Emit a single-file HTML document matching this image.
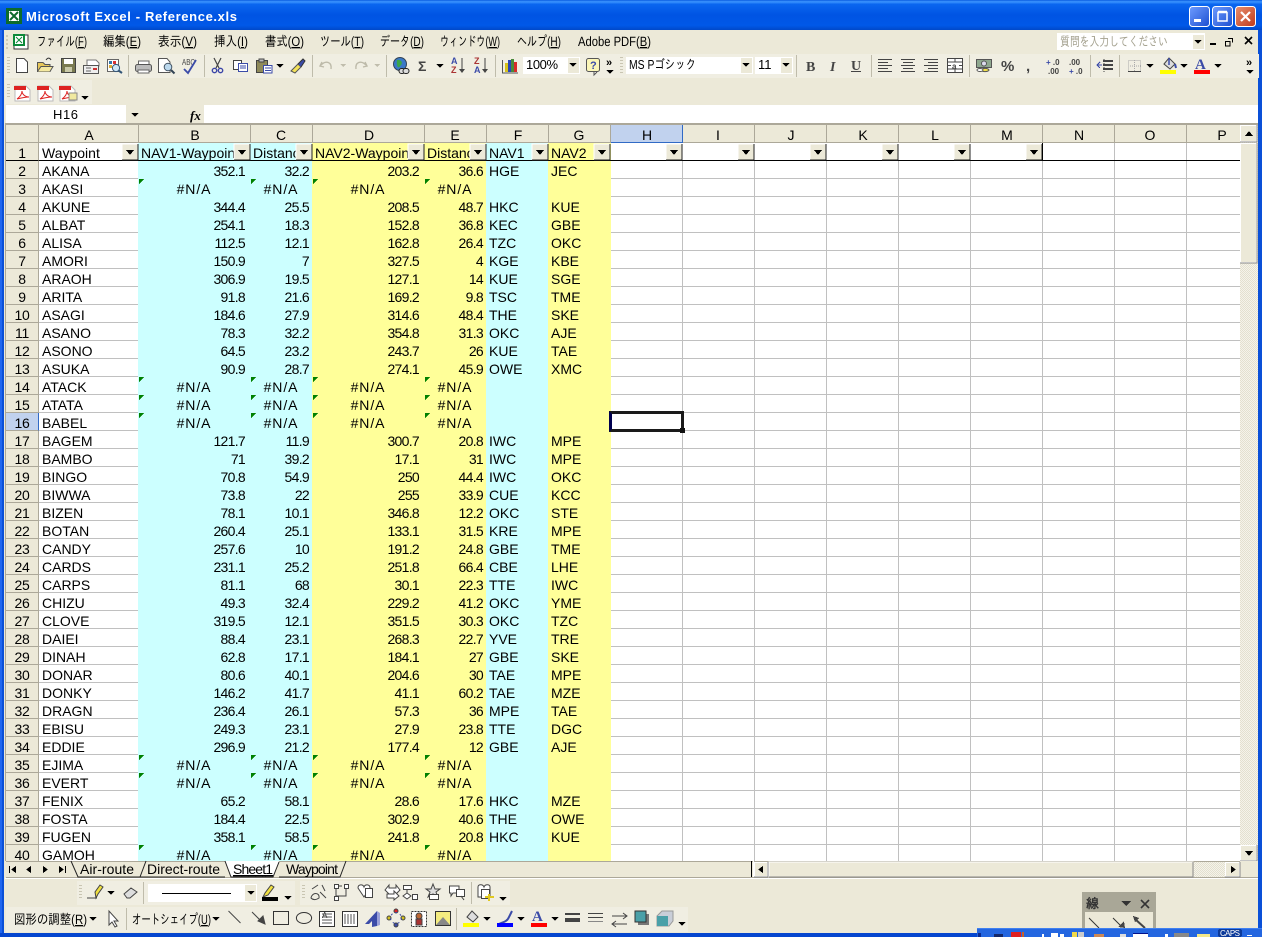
<!DOCTYPE html>
<html><head><meta charset="utf-8"><title>Microsoft Excel - Reference.xls</title>
<style>
html,body{margin:0;padding:0;width:1262px;height:937px;overflow:hidden;background:#ece9d8}
body{position:relative;font-family:"Liberation Sans","IPAGothic","Noto Sans CJK JP",sans-serif;color:#000}
#empty{position:absolute;left:610px;top:161px;width:630px;height:700px;background-color:#fff;
background-image:linear-gradient(to right,transparent 71px,#c0c0c0 71px),linear-gradient(to bottom,transparent 17px,#c0c0c0 17px);background-size:72px 100%,100% 18px;background-position:1px 0,0 0}
#clip{position:absolute;left:6px;top:143px;width:605px;height:718px;overflow:hidden}
table{border-collapse:separate;border-spacing:0;table-layout:fixed;width:605px;font-size:14px}
td,th{line-height:14px;padding:3px 0 0;font-weight:normal;white-space:nowrap;overflow:hidden;box-sizing:content-box;vertical-align:top}
th{background:#ece9d8;text-align:center;border-right:1px solid #aca899;border-bottom:1px solid #aca899;height:14px;letter-spacing:-.3px}
td{height:15px}
td:nth-child(2){background:#fff;border-bottom:1px solid #c0c0c0;height:14px;padding-left:3px}
td:nth-child(3),td:nth-child(4),td:nth-child(7){background:#ccffff}
td:nth-child(5),td:nth-child(6),td:nth-child(8){background:#ffff99}
td:nth-child(n+3):nth-child(-n+6){text-align:right;letter-spacing:-.7px}
td:nth-child(3),td:nth-child(5){padding-right:5px}
td:nth-child(4),td:nth-child(6){padding-right:3px}
td:nth-child(7){padding-left:3px}
td:nth-child(8){padding-left:3px}
tr.x td:nth-child(n+3):nth-child(-n+6){text-align:center;padding-left:0;padding-right:0;letter-spacing:.9px;background-image:linear-gradient(135deg,#008000 3.6px,transparent 3.6px);background-size:6px 6px;background-repeat:no-repeat;background-position:1px 0}
tr.f td{height:14px;border-bottom:1px solid #000;text-align:left!important;padding-left:3px!important;padding-right:0!important;letter-spacing:0!important}
tr.f th{border-bottom:1px solid #000}
tr.s th{background:#c1d2ee;border-right-color:#316ac5}
#sel{position:absolute;left:609px;top:411px;width:69px;height:15px;border:3px solid #1a1a1a;border-left-color:#000050}
svg{position:absolute;left:0;top:0}
</style></head><body>
<div id="empty"></div>
<div id="clip"><table>
<colgroup><col style="width:33px"><col style="width:99px"><col style="width:112px"><col style="width:62px"><col style="width:112px"><col style="width:62px"><col style="width:62px"><col style="width:63px"></colgroup>
<tr class="f"><th>1</th><td>Waypoint</td><td>NAV1-Waypoint</td><td>Distance</td><td>NAV2-Waypoint</td><td>Distance</td><td>NAV1</td><td>NAV2</td></tr>
<tr><th>2</th><td>AKANA</td><td>352.1</td><td>32.2</td><td>203.2</td><td>36.6</td><td>HGE</td><td>JEC</td></tr>
<tr class="x"><th>3</th><td>AKASI</td><td>#N/A</td><td>#N/A</td><td>#N/A</td><td>#N/A</td><td></td><td></td></tr>
<tr><th>4</th><td>AKUNE</td><td>344.4</td><td>25.5</td><td>208.5</td><td>48.7</td><td>HKC</td><td>KUE</td></tr>
<tr><th>5</th><td>ALBAT</td><td>254.1</td><td>18.3</td><td>152.8</td><td>36.8</td><td>KEC</td><td>GBE</td></tr>
<tr><th>6</th><td>ALISA</td><td>112.5</td><td>12.1</td><td>162.8</td><td>26.4</td><td>TZC</td><td>OKC</td></tr>
<tr><th>7</th><td>AMORI</td><td>150.9</td><td>7</td><td>327.5</td><td>4</td><td>KGE</td><td>KBE</td></tr>
<tr><th>8</th><td>ARAOH</td><td>306.9</td><td>19.5</td><td>127.1</td><td>14</td><td>KUE</td><td>SGE</td></tr>
<tr><th>9</th><td>ARITA</td><td>91.8</td><td>21.6</td><td>169.2</td><td>9.8</td><td>TSC</td><td>TME</td></tr>
<tr><th>10</th><td>ASAGI</td><td>184.6</td><td>27.9</td><td>314.6</td><td>48.4</td><td>THE</td><td>SKE</td></tr>
<tr><th>11</th><td>ASANO</td><td>78.3</td><td>32.2</td><td>354.8</td><td>31.3</td><td>OKC</td><td>AJE</td></tr>
<tr><th>12</th><td>ASONO</td><td>64.5</td><td>23.2</td><td>243.7</td><td>26</td><td>KUE</td><td>TAE</td></tr>
<tr><th>13</th><td>ASUKA</td><td>90.9</td><td>28.7</td><td>274.1</td><td>45.9</td><td>OWE</td><td>XMC</td></tr>
<tr class="x"><th>14</th><td>ATACK</td><td>#N/A</td><td>#N/A</td><td>#N/A</td><td>#N/A</td><td></td><td></td></tr>
<tr class="x"><th>15</th><td>ATATA</td><td>#N/A</td><td>#N/A</td><td>#N/A</td><td>#N/A</td><td></td><td></td></tr>
<tr class="x s"><th>16</th><td>BABEL</td><td>#N/A</td><td>#N/A</td><td>#N/A</td><td>#N/A</td><td></td><td></td></tr>
<tr><th>17</th><td>BAGEM</td><td>121.7</td><td>11.9</td><td>300.7</td><td>20.8</td><td>IWC</td><td>MPE</td></tr>
<tr><th>18</th><td>BAMBO</td><td>71</td><td>39.2</td><td>17.1</td><td>31</td><td>IWC</td><td>MPE</td></tr>
<tr><th>19</th><td>BINGO</td><td>70.8</td><td>54.9</td><td>250</td><td>44.4</td><td>IWC</td><td>OKC</td></tr>
<tr><th>20</th><td>BIWWA</td><td>73.8</td><td>22</td><td>255</td><td>33.9</td><td>CUE</td><td>KCC</td></tr>
<tr><th>21</th><td>BIZEN</td><td>78.1</td><td>10.1</td><td>346.8</td><td>12.2</td><td>OKC</td><td>STE</td></tr>
<tr><th>22</th><td>BOTAN</td><td>260.4</td><td>25.1</td><td>133.1</td><td>31.5</td><td>KRE</td><td>MPE</td></tr>
<tr><th>23</th><td>CANDY</td><td>257.6</td><td>10</td><td>191.2</td><td>24.8</td><td>GBE</td><td>TME</td></tr>
<tr><th>24</th><td>CARDS</td><td>231.1</td><td>25.2</td><td>251.8</td><td>66.4</td><td>CBE</td><td>LHE</td></tr>
<tr><th>25</th><td>CARPS</td><td>81.1</td><td>68</td><td>30.1</td><td>22.3</td><td>TTE</td><td>IWC</td></tr>
<tr><th>26</th><td>CHIZU</td><td>49.3</td><td>32.4</td><td>229.2</td><td>41.2</td><td>OKC</td><td>YME</td></tr>
<tr><th>27</th><td>CLOVE</td><td>319.5</td><td>12.1</td><td>351.5</td><td>30.3</td><td>OKC</td><td>TZC</td></tr>
<tr><th>28</th><td>DAIEI</td><td>88.4</td><td>23.1</td><td>268.3</td><td>22.7</td><td>YVE</td><td>TRE</td></tr>
<tr><th>29</th><td>DINAH</td><td>62.8</td><td>17.1</td><td>184.1</td><td>27</td><td>GBE</td><td>SKE</td></tr>
<tr><th>30</th><td>DONAR</td><td>80.6</td><td>40.1</td><td>204.6</td><td>30</td><td>TAE</td><td>MPE</td></tr>
<tr><th>31</th><td>DONKY</td><td>146.2</td><td>41.7</td><td>41.1</td><td>60.2</td><td>TAE</td><td>MZE</td></tr>
<tr><th>32</th><td>DRAGN</td><td>236.4</td><td>26.1</td><td>57.3</td><td>36</td><td>MPE</td><td>TAE</td></tr>
<tr><th>33</th><td>EBISU</td><td>249.3</td><td>23.1</td><td>27.9</td><td>23.8</td><td>TTE</td><td>DGC</td></tr>
<tr><th>34</th><td>EDDIE</td><td>296.9</td><td>21.2</td><td>177.4</td><td>12</td><td>GBE</td><td>AJE</td></tr>
<tr class="x"><th>35</th><td>EJIMA</td><td>#N/A</td><td>#N/A</td><td>#N/A</td><td>#N/A</td><td></td><td></td></tr>
<tr class="x"><th>36</th><td>EVERT</td><td>#N/A</td><td>#N/A</td><td>#N/A</td><td>#N/A</td><td></td><td></td></tr>
<tr><th>37</th><td>FENIX</td><td>65.2</td><td>58.1</td><td>28.6</td><td>17.6</td><td>HKC</td><td>MZE</td></tr>
<tr><th>38</th><td>FOSTA</td><td>184.4</td><td>22.5</td><td>302.9</td><td>40.6</td><td>THE</td><td>OWE</td></tr>
<tr><th>39</th><td>FUGEN</td><td>358.1</td><td>58.5</td><td>241.8</td><td>20.8</td><td>HKC</td><td>KUE</td></tr>
<tr class="x"><th>40</th><td>GAMOH</td><td>#N/A</td><td>#N/A</td><td>#N/A</td><td>#N/A</td><td></td><td></td></tr>
</table></div>
<div id="sel"></div>
<svg width="1262" height="937" viewBox="0 0 1262 937" font-family="'Liberation Sans','IPAGothic','Noto Sans CJK JP',sans-serif" shape-rendering="crispEdges">
<defs>
<linearGradient id="tb" x1="0" y1="0" x2="0" y2="1"><stop offset="0" stop-color="#0a5ce0"/><stop offset=".06" stop-color="#3d95ff"/><stop offset=".14" stop-color="#0a66f0"/><stop offset=".5" stop-color="#0054e3"/><stop offset=".85" stop-color="#0058e8"/><stop offset="1" stop-color="#0048c8"/></linearGradient>
<linearGradient id="bl" x1="0" y1="0" x2="1" y2="1"><stop offset="0" stop-color="#6f9cff"/><stop offset="1" stop-color="#1c4fd0"/></linearGradient>
<linearGradient id="rd" x1="0" y1="0" x2="1" y2="1"><stop offset="0" stop-color="#e8906f"/><stop offset="1" stop-color="#c0391a"/></linearGradient>
<pattern id="ht" width="2" height="2" patternUnits="userSpaceOnUse"><rect width="2" height="2" fill="#f5f3ea"/><rect width="1" height="1" fill="#e3e0cf"/><rect x="1" y="1" width="1" height="1" fill="#e3e0cf"/></pattern>
<g id="dd"><polygon points="-3.5,0 3.5,0 0,4" fill="#000"/></g>
<g id="fb"><rect x="0" y="0" width="16" height="16" fill="#ece9d8"/><path d="M0 16V0H16" fill="none" stroke="#fff"/><path d="M0 16H16V0" fill="none" stroke="#222"/><polygon points="4,6 12,6 8,11" fill="#000"/></g>
<g id="pdf"><path d="M1 1H12L16 5V16H1Z" fill="#fff" stroke="#bbb"/><rect x="0" y="1" width="12" height="4" fill="#d22"/><path d="M3 14C7 11 8 8 8 6C8 9 11 12 15 12C11 12 7 13 3 14" fill="none" stroke="#d22" shape-rendering="auto"/></g>
</defs>

<!-- window frame -->
<rect x="0" y="0" width="1262" height="30" fill="url(#tb)"/>
<rect x="0" y="30" width="4" height="907" fill="#0a50d8"/>
<rect x="0" y="30" width="2" height="907" fill="#1f66f0"/>
<rect x="1258" y="30" width="4" height="907" fill="#0a50d8"/>
<rect x="0" y="933" width="1262" height="4" fill="#0546cf"/>

<!-- title -->
<rect x="6" y="8" width="16" height="16" fill="#0d6b2c"/><rect x="9" y="11" width="10" height="10" fill="#fff"/><path d="M10 12L18 20M18 12L10 20" stroke="#0d6b2c" stroke-width="2" shape-rendering="auto"/>
<text x="26" y="21" fill="#fff" font-size="13" font-weight="bold" textLength="211" lengthAdjust="spacing">Microsoft Excel - Reference.xls</text>
<g shape-rendering="auto"><rect x="1189.5" y="6.5" width="20" height="20" rx="3" fill="url(#bl)" stroke="#fff"/><rect x="1194" y="19" width="7" height="3" fill="#fff"/>
<rect x="1212.5" y="6.5" width="20" height="20" rx="3" fill="url(#bl)" stroke="#fff"/><path d="M1218 12.5H1227V21H1218Z M1218 11.5H1227" fill="none" stroke="#fff" stroke-width="1.5"/>
<rect x="1235.5" y="6.5" width="20" height="20" rx="3" fill="url(#rd)" stroke="#fff"/><path d="M1241 12L1250 21M1250 12L1241 21" stroke="#fff" stroke-width="2.2"/></g>

<!-- menu -->
<g fill="#d0ccb8"><rect x="6" y="35" width="2" height="2"/><rect x="6" y="39" width="2" height="2"/><rect x="6" y="43" width="2" height="2"/><rect x="6" y="47" width="2" height="2"/></g>
<rect x="14" y="35" width="14" height="14" fill="#fff" stroke="#333"/><rect x="13" y="34" width="12" height="12" fill="#0d8a3a"/><rect x="15" y="36" width="8" height="8" fill="#fff"/><path d="M16 37L22 43M22 37L16 43" stroke="#0d8a3a" shape-rendering="auto"/>
<g font-size="13.5" fill="#000" text-rendering="geometricPrecision">
<text x="37" y="46" textLength="50" lengthAdjust="spacingAndGlyphs">ファイル(<tspan text-decoration="underline">F</tspan>)</text>
<text x="103" y="46" textLength="38" lengthAdjust="spacingAndGlyphs">編集(<tspan text-decoration="underline">E</tspan>)</text>
<text x="158" y="46" textLength="39" lengthAdjust="spacingAndGlyphs">表示(<tspan text-decoration="underline">V</tspan>)</text>
<text x="214" y="46" textLength="34" lengthAdjust="spacingAndGlyphs">挿入(<tspan text-decoration="underline">I</tspan>)</text>
<text x="265" y="46" textLength="39" lengthAdjust="spacingAndGlyphs">書式(<tspan text-decoration="underline">O</tspan>)</text>
<text x="320" y="46" textLength="44" lengthAdjust="spacingAndGlyphs">ツール(<tspan text-decoration="underline">T</tspan>)</text>
<text x="380" y="46" textLength="44" lengthAdjust="spacingAndGlyphs">データ(<tspan text-decoration="underline">D</tspan>)</text>
<text x="440" y="46" textLength="60" lengthAdjust="spacingAndGlyphs">ウィンドウ(<tspan text-decoration="underline">W</tspan>)</text>
<text x="517" y="46" textLength="44" lengthAdjust="spacingAndGlyphs">ヘルプ(<tspan text-decoration="underline">H</tspan>)</text>
<text x="578" y="46" textLength="73" lengthAdjust="spacingAndGlyphs">Adobe PDF(<tspan text-decoration="underline">B</tspan>)</text>
</g>
<rect x="1057" y="33" width="148" height="17" fill="#fff"/><rect x="1193" y="35" width="11" height="14" fill="#ece9d8"/><use href="#dd" x="1198" y="40"/>
<text x="1060" y="46" font-size="13" fill="#a5a290" textLength="108" lengthAdjust="spacingAndGlyphs">質問を入力してください</text>
<rect x="1210" y="43" width="6" height="2" fill="#000"/>
<path d="M1228 38.5H1232.5V42.5M1225.5 41.5H1230V46H1225.5Z" fill="none" stroke="#000"/>
<path d="M1245 37L1252 44M1252 37L1245 44" stroke="#000" stroke-width="1.6" shape-rendering="auto"/>

<!-- toolbar bands -->
<rect x="5" y="54" width="615" height="24" fill="#f0eee2"/><rect x="619" y="54" width="640" height="24" fill="#f0eee2"/>
<rect x="5" y="80" width="87" height="24" fill="#f0eee2"/>
<g fill="#c9c5b2"><rect x="7" y="57" width="3" height="1"/><rect x="7" y="60" width="3" height="1"/><rect x="7" y="63" width="3" height="1"/><rect x="7" y="66" width="3" height="1"/><rect x="7" y="69" width="3" height="1"/><rect x="7" y="72" width="3" height="1"/>
<rect x="620" y="57" width="3" height="1"/><rect x="620" y="60" width="3" height="1"/><rect x="620" y="63" width="3" height="1"/><rect x="620" y="66" width="3" height="1"/><rect x="620" y="69" width="3" height="1"/><rect x="620" y="72" width="3" height="1"/>
<rect x="7" y="84" width="3" height="1"/><rect x="7" y="87" width="3" height="1"/><rect x="7" y="90" width="3" height="1"/><rect x="7" y="93" width="3" height="1"/><rect x="7" y="96" width="3" height="1"/></g>
<g fill="#bfbcab"><rect x="128" y="55" width="1" height="22"/><rect x="204" y="55" width="1" height="22"/><rect x="312" y="55" width="1" height="22"/><rect x="386" y="55" width="1" height="22"/><rect x="495" y="55" width="1" height="22"/><rect x="796" y="55" width="1" height="22"/><rect x="871" y="55" width="1" height="22"/><rect x="969" y="55" width="1" height="22"/><rect x="1090" y="55" width="1" height="22"/><rect x="1119" y="55" width="1" height="22"/></g>

<!-- toolbar 1 icons -->
<g shape-rendering="auto" stroke-width="1">
<path d="M16.5 58.5H24L27.5 62V72.5H16.5Z" fill="#fff" stroke="#444"/>
<path d="M37.5 62.5H43L45 64.5H50V71.5H37.5Z" fill="#e8c85a" stroke="#555"/><path d="M37.5 71.5L41 66.5H53L50 71.5" fill="#f5e9a0" stroke="#555"/><path d="M46 60C48 57 50 58 51 60" fill="none" stroke="#333"/>
<rect x="61.5" y="58.5" width="14" height="14" fill="#7a7a50" stroke="#444"/><rect x="64" y="59" width="9" height="5" fill="#fff"/><rect x="65" y="67" width="7" height="5" fill="#c9c9a8"/>
<path d="M87 60H96L99 63V66H87Z" fill="#fff" stroke="#777"/><rect x="83.5" y="65.5" width="15" height="8" fill="#eee" stroke="#555"/><path d="M86 68H91M86 71H91" stroke="#666"/><path d="M93 69H97" stroke="#c33" stroke-width="2"/>
<rect x="107.5" y="59.5" width="11" height="12" fill="#fff" stroke="#666"/><rect x="109" y="61" width="3" height="3" fill="#37a"/><rect x="113" y="61" width="3" height="3" fill="#d33"/><rect x="109" y="65" width="3" height="3" fill="#da3"/><circle cx="116" cy="68" r="3.6" fill="#cfe6f5" stroke="#357"/><path d="M118.5 70.5L122 73" stroke="#357" stroke-width="2"/>
<path d="M138.5 61H149V65H138.5Z" fill="#fff" stroke="#666"/><rect x="135.5" y="64.5" width="16" height="7" rx="2" fill="#bbb" stroke="#555"/><rect x="138" y="70" width="11" height="3" fill="#fff" stroke="#666"/>
<path d="M158.5 58.5H167L170 62V72.5H158.5Z" fill="#fff" stroke="#555"/><circle cx="168" cy="67" r="3.8" fill="#bcd9ee" stroke="#456"/><path d="M171 70L174.5 73.5" stroke="#345" stroke-width="2"/>
<text x="182" y="65" font-size="8" fill="#444" textLength="13" lengthAdjust="spacingAndGlyphs">ABC</text><path d="M184 69L188 73L196 60" fill="none" stroke="#3b4ba8" stroke-width="1.8"/>
<path d="M214 58L219 68M221 58L216 68" stroke="#444" stroke-width="1.2"/><circle cx="214.5" cy="70.5" r="2.2" fill="none" stroke="#3c46a8" stroke-width="1.4"/><circle cx="220.5" cy="70.5" r="2.2" fill="none" stroke="#3c46a8" stroke-width="1.4"/>
<rect x="233.5" y="60.5" width="8" height="9" fill="#fff" stroke="#444"/><rect x="238.5" y="63.5" width="9" height="8" fill="#fff" stroke="#3b4ba8"/><path d="M240 66H246M240 68H246" stroke="#3b4ba8"/>
<rect x="256.5" y="60.5" width="11" height="12" fill="#8f8a5a" stroke="#444"/><rect x="259" y="59" width="5" height="3" fill="#bbb" stroke="#444"/><rect x="263.5" y="65.5" width="8.5" height="7.5" fill="#fff" stroke="#3b4ba8"/><path d="M265 68H271M265 70.5H271" stroke="#3b4ba8"/>
<path d="M291 71L298 64L301 67L295 73Z" fill="#f5e35a" stroke="#555"/><path d="M298 64L303 59L305 61L301 67" fill="#3b4ba8" stroke="#333"/>
<g fill="none" stroke="#bdbaa9" stroke-width="1.4"><path d="M322 62L320 66L324 67M321 65C326 60 332 62 331 69"/><path d="M365 62L367 66L363 67M366 65C361 60 355 62 356 69"/></g>
<circle cx="400" cy="64" r="6.5" fill="#3a78c8" stroke="#345"/><path d="M397 60C401 59 404 63 400 66C399 69 396 67 397 60Z" fill="#3aa64a"/><rect x="399" y="68.5" width="6" height="5" rx="2.5" fill="#ddd" stroke="#222"/><rect x="403" y="68.5" width="6" height="5" rx="2.5" fill="#ddd" stroke="#222"/>
<text x="418" y="71" font-size="14" fill="#444" font-weight="bold">Σ</text>
<text x="451" y="64" font-size="9" font-weight="bold" fill="#3b4ba8">A</text><text x="451" y="73" font-size="9" font-weight="bold" fill="#a33">Z</text><path d="M462 58V71" stroke="#444"/><polygon points="459,69 465,69 462,73" fill="#444"/>
<text x="474" y="64" font-size="9" font-weight="bold" fill="#a33">Z</text><text x="474" y="73" font-size="9" font-weight="bold" fill="#3b4ba8">A</text><path d="M485 58V71" stroke="#444"/><polygon points="482,69 488,69 485,73" fill="#444"/>
<path d="M502.5 60V73H518" fill="none" stroke="#555"/><rect x="505" y="63" width="3" height="9" fill="#d6c21c"/><rect x="508" y="60" width="3" height="12" fill="#2a45b8"/><rect x="511" y="59" width="3" height="13" fill="#4a8a3a"/><rect x="514" y="62" width="3" height="10" fill="#d82a2a"/>
<rect x="586.5" y="58.5" width="13" height="13" rx="2" fill="#fbf6b8" stroke="#555"/><text x="590" y="69" font-size="11" font-weight="bold" fill="#3b4ba8">?</text><path d="M594 72V75L597 72" fill="#fff" stroke="#555"/>
</g>
<use href="#dd" x="280" y="64"/><use href="#dd" x="440" y="64"/>
<g fill="#c0bdac"><polygon points="340,64 346,64 343,67"/><polygon points="374,64 380,64 377,67"/></g>
<text x="606" y="66" font-size="11" font-weight="bold">»</text><use href="#dd" x="610" y="70"/>
<rect x="523" y="57" width="57" height="17" fill="#fff"/><rect x="568" y="58" width="11" height="15" fill="#ece9d8"/><use href="#dd" x="573" y="63"/>
<text x="526" y="69" font-size="13" letter-spacing="-.4">100%</text>
<rect x="626" y="57" width="127" height="17" fill="#fff"/><rect x="741" y="58" width="11" height="15" fill="#ece9d8"/><use href="#dd" x="746" y="63"/>
<text x="629" y="69" font-size="13" textLength="67" lengthAdjust="spacingAndGlyphs">MS Pゴシック</text>
<rect x="755" y="57" width="38" height="17" fill="#fff"/><rect x="781" y="58" width="11" height="15" fill="#ece9d8"/><use href="#dd" x="786" y="63"/>
<text x="758" y="69" font-size="13">11</text>
<g font-family="'Liberation Serif',serif" font-size="14" font-weight="bold" fill="#444" shape-rendering="auto"><text x="806" y="71">B</text><text x="830" y="71" font-style="italic">I</text><text x="851" y="70">U</text></g><rect x="851" y="71" width="10" height="1" fill="#444"/>
<g fill="#444">
<path d="M878 59h14v1h-14zM878 62h10v1h-10zM878 65h14v1h-14zM878 68h10v1h-10zM878 71h14v1h-14z"/>
<path d="M901 59h14v1h-14zM903 62h10v1h-10zM901 65h14v1h-14zM903 68h10v1h-10zM901 71h14v1h-14z"/>
<path d="M924 59h14v1h-14zM928 62h10v1h-10zM924 65h14v1h-14zM928 68h10v1h-10zM924 71h14v1h-14z"/>
</g>
<rect x="947.5" y="58.5" width="15" height="14" fill="#fff" stroke="#444"/><path d="M947 62H963M947 69H963M955 58V62M955 69V73" stroke="#444"/><text x="952" y="69" font-size="8" font-weight="bold" fill="#444">a</text><path d="M948 65.5H951M959 65.5H962" stroke="#444"/>
<g shape-rendering="auto">
<rect x="976.5" y="59.5" width="15" height="8" fill="#8fa88f" stroke="#555"/><circle cx="984" cy="63.5" r="2.5" fill="#dde" stroke="#555"/><ellipse cx="985" cy="70" rx="4" ry="1.6" fill="#f1e04a" stroke="#555"/><ellipse cx="980" cy="70" rx="3" ry="1.5" fill="#fff" stroke="#555"/>
<text x="1001" y="71" font-size="15" font-weight="bold" fill="#444">%</text>
<text x="1026" y="71" font-size="15" font-weight="bold" fill="#444">,</text>
<text x="1046" y="65" font-size="8" font-weight="bold" fill="#444"><tspan fill="#3b4ba8">+</tspan> .0</text><text x="1048" y="74" font-size="8" font-weight="bold" fill="#444">.00</text>
<text x="1069" y="65" font-size="8" font-weight="bold" fill="#444">.00</text><text x="1069" y="74" font-size="8" font-weight="bold" fill="#444"><tspan fill="#3b4ba8">+</tspan> .0</text>
</g>
<path d="M1103 60h10v2h-10zM1103 64h10v2h-10zM1103 68h10v2h-10z" fill="#444"/><path d="M1097 65H1102M1100 62L1097 65L1100 68" fill="none" stroke="#3b4ba8" stroke-width="1.4"/><path d="M1104 59V73" stroke="#444" stroke-dasharray="1 1"/>
<rect x="1128.5" y="60.5" width="12" height="11" fill="none" stroke="#aaa" stroke-dasharray="1 1"/><path d="M1134.5 60V72M1128 66H1141" stroke="#aaa" stroke-dasharray="1 1"/><rect x="1128" y="71" width="13" height="1" fill="#444"/>
<use href="#dd" x="1150" y="64"/>
<g shape-rendering="auto"><path d="M1164 64L1169 58L1175 64L1170 69Z" fill="#ddd" stroke="#444"/><path d="M1169 58V65" stroke="#3b4ba8" stroke-width="1.5"/><path d="M1175 64L1176 68" stroke="#3b4ba8" stroke-width="2"/></g>
<rect x="1160" y="70" width="16" height="4" fill="#ffff00"/><use href="#dd" x="1184" y="64"/>
<text x="1195" y="69" font-size="15" font-weight="bold" font-family="'Liberation Serif',serif" fill="#3b4ba8" shape-rendering="auto">A</text><rect x="1194" y="70" width="16" height="4" fill="#ff0000"/><use href="#dd" x="1218" y="64"/>
<text x="1246" y="66" font-size="11" font-weight="bold">»</text><use href="#dd" x="1250" y="70"/>

<!-- toolbar 2 -->
<g shape-rendering="auto"><use href="#pdf" x="14" y="85"/><use href="#pdf" x="37" y="85"/><use href="#pdf" x="59" y="85"/><rect x="69" y="93" width="8" height="7" fill="#f0e9a0" stroke="#888"/></g>
<use href="#dd" x="85" y="96"/>

<!-- name box / formula -->
<rect x="6" y="105" width="120" height="18" fill="#fff"/>
<text x="53" y="119" font-size="13" textLength="25" lengthAdjust="spacing">H16</text>
<use href="#dd" x="135" y="113"/>
<text x="190" y="120" font-size="13" font-weight="bold" font-style="italic" font-family="'Liberation Serif',serif" shape-rendering="auto">fx</text>
<rect x="204" y="105" width="1054" height="18" fill="#fff"/>
<rect x="5" y="123" width="1253" height="2" fill="#aca899"/>
<rect x="5" y="125" width="1" height="736" fill="#aca899"/>

<!-- column headers -->
<rect x="6" y="125" width="1234" height="18" fill="#ece9d8"/>
<rect x="611" y="125" width="71" height="17" fill="#c1d2ee"/><rect x="611" y="142" width="72" height="1" fill="#316ac5"/><rect x="682" y="125" width="1" height="18" fill="#316ac5"/><rect x="6" y="142" width="605" height="1" fill="#aca899"/><rect x="683" y="142" width="557" height="1" fill="#aca899"/>
<g fill="#aca899"><rect x="38" y="125" width="1" height="18"/><rect x="138" y="125" width="1" height="18"/><rect x="250" y="125" width="1" height="18"/><rect x="312" y="125" width="1" height="18"/><rect x="424" y="125" width="1" height="18"/><rect x="486" y="125" width="1" height="18"/><rect x="548" y="125" width="1" height="18"/><rect x="610" y="125" width="1" height="18"/><rect x="754" y="125" width="1" height="18"/><rect x="826" y="125" width="1" height="18"/><rect x="898" y="125" width="1" height="18"/><rect x="970" y="125" width="1" height="18"/><rect x="1042" y="125" width="1" height="18"/><rect x="1114" y="125" width="1" height="18"/><rect x="1186" y="125" width="1" height="18"/></g>
<g font-size="14" text-anchor="middle" fill="#000"><text x="89" y="140">A</text><text x="195" y="140">B</text><text x="281" y="140">C</text><text x="369" y="140">D</text><text x="455" y="140">E</text><text x="518" y="140">F</text><text x="579" y="140">G</text><text x="647" y="140">H</text><text x="718" y="140">I</text><text x="791" y="140">J</text><text x="863" y="140">K</text><text x="935" y="140">L</text><text x="1007" y="140">M</text><text x="1079" y="140">N</text><text x="1150" y="140">O</text><text x="1222" y="140">P</text></g>

<!-- row 1 grid extras -->
<rect x="611" y="143" width="629" height="18" fill="#fff"/><rect x="611" y="160" width="629" height="1" fill="#000"/>
<g fill="#c0c0c0"><rect x="1114" y="143" width="1" height="17"/><rect x="1186" y="143" width="1" height="17"/></g>
<use href="#fb" x="122" y="144"/><use href="#fb" x="234" y="144"/><use href="#fb" x="296" y="144"/><use href="#fb" x="408" y="144"/><use href="#fb" x="470" y="144"/><use href="#fb" x="532" y="144"/><use href="#fb" x="594" y="144"/><use href="#fb" x="666" y="144"/><use href="#fb" x="738" y="144"/><use href="#fb" x="810" y="144"/><use href="#fb" x="882" y="144"/><use href="#fb" x="954" y="144"/><use href="#fb" x="1026" y="144"/>
<rect x="1042" y="143" width="1" height="17" fill="#000"/>
<rect x="680" y="428" width="5" height="5" fill="#111"/>

<!-- vertical scrollbar -->
<rect x="1240" y="125" width="18" height="736" fill="url(#ht)"/>
<rect x="1240.5" y="125.5" width="16" height="16" fill="#ece9d8" stroke="#fff"/><path d="M1240 142H1257V125" fill="none" stroke="#888"/><polygon points="1245,136 1253,136 1249,131" fill="#000"/>
<rect x="1240.5" y="143.5" width="16" height="119" fill="#ece9d8" stroke="#fff"/><path d="M1240 263H1257V143" fill="none" stroke="#888"/>
<rect x="1240.5" y="845.5" width="16" height="15" fill="#ece9d8" stroke="#fff"/><path d="M1240 861H1257V845" fill="none" stroke="#888"/><polygon points="1245,851 1253,851 1249,856" fill="#000"/>

<!-- tab strip -->
<rect x="6" y="861" width="1252" height="17" fill="#ece9d8"/><rect x="6" y="861" width="1234" height="1" fill="#aca899"/>
<rect x="6" y="877" width="1252" height="1" fill="#aca899"/><rect x="5" y="878" width="1253" height="1" fill="#fff"/>
<g fill="#000"><rect x="9" y="866" width="1" height="7"/><polygon points="16,866 16,873 11,869.5"/><polygon points="31,866 31,873 26,869.5"/><polygon points="43,866 43,873 48,869.5"/><polygon points="59,866 59,873 64,869.5"/><rect x="65" y="866" width="1" height="7"/></g>
<path d="M225 861H279L273 877H231Z" fill="#fff" shape-rendering="auto"/>
<g fill="none" stroke="#222" shape-rendering="auto"><path d="M71 861L78 877H140L146 861"/><path d="M140 877H225"/><path d="M225 861L231 877H273L279 862"/><path d="M279 877H340L346 861"/></g>
<g font-size="14"><text x="80" y="874" textLength="54" lengthAdjust="spacing">Air-route</text><text x="147" y="874" textLength="73" lengthAdjust="spacing">Direct-route</text><text x="233" y="874" textLength="40" lengthAdjust="spacing" text-decoration="underline">Sheet1</text><text x="286" y="874" textLength="52" lengthAdjust="spacing">Waypoint</text></g>
<rect x="751" y="861" width="1" height="16" fill="#000"/><rect x="753" y="861" width="1" height="16" fill="#fff"/>
<rect x="754.5" y="862.5" width="13" height="14" fill="#ece9d8" stroke="#fff"/><path d="M754 877H768V862" fill="none" stroke="#888"/><polygon points="763,866 763,873 758,869.5" fill="#000"/>
<rect x="769" y="862" width="424" height="15" fill="#ece9d8" stroke="#fff"/><path d="M769 877H1193V862" fill="none" stroke="#888"/>
<rect x="1194" y="862" width="31" height="15" fill="url(#ht)"/>
<rect x="1225.5" y="862.5" width="14" height="14" fill="#ece9d8" stroke="#fff"/><path d="M1225 877H1240V862" fill="none" stroke="#888"/><polygon points="1231,866 1231,873 1236,869.5" fill="#000"/>

<!-- drawing toolbars -->
<rect x="77" y="881" width="218" height="24" fill="#f0eee2"/><rect x="300" y="881" width="210" height="24" fill="#f0eee2"/><rect x="6" y="907" width="682" height="25" fill="#f0eee2"/>
<g fill="#c9c5b2"><rect x="79" y="885" width="3" height="1"/><rect x="79" y="888" width="3" height="1"/><rect x="79" y="891" width="3" height="1"/><rect x="79" y="894" width="3" height="1"/><rect x="79" y="897" width="3" height="1"/><rect x="302" y="885" width="3" height="1"/><rect x="302" y="888" width="3" height="1"/><rect x="302" y="891" width="3" height="1"/><rect x="302" y="894" width="3" height="1"/><rect x="302" y="897" width="3" height="1"/></g>
<g fill="#bfbcab"><rect x="143" y="882" width="1" height="22"/><rect x="471" y="882" width="1" height="22"/><rect x="126" y="908" width="1" height="22"/><rect x="456" y="908" width="1" height="22"/></g>
<g shape-rendering="auto" fill="none" stroke="#444">
<path d="M87 898H97" /><path d="M96 898L95 892L100 885L103 887L98 894Z" fill="#f0e040"/>
<path d="M124 894L131 888L137 892L130 898H127Z" fill="#ddd"/>
<path d="M263 897L265 893L271 885L274 887L268 895Z" fill="#f0e040"/>
<path d="M312 889L318 885M322 885L325 891M311 898C312 892 320 892 319 898C316 900 313 900 311 898ZM320 892L326 898"/>
<path d="M336 886V896H346V884M336 886H342" /><rect x="334.5" y="884.5" width="4" height="4" fill="#fff"/><rect x="344.5" y="884.5" width="4" height="4" fill="#fff"/><rect x="334.5" y="896.5" width="4" height="4" fill="#fff"/>
<path d="M358 888C358 884 363 884 364 887C365 884 370 884 370 888L364 897Z" fill="#fff"/><rect x="365.5" y="888.5" width="7" height="9" fill="#fff"/>
<path d="M385 890L389 885V888H396V885L400 890L396 894H389Z" fill="#fff"/><path d="M387 894H394V891L399 896L394 900V898H387Z" fill="#fff"/>
<rect x="403.5" y="885.5" width="8" height="4" fill="#fff"/><path d="M407 890V893M403 896L407 893L411 896L407 899Z" fill="#fff"/><rect x="412.5" y="894.5" width="5" height="5" fill="#fff"/>
<path d="M433 884L435 889L440 889L436 892L438 897L433 894L428 897L430 892L426 889L431 889Z" fill="#ddd"/><rect x="429.5" y="894.5" width="9" height="5" fill="#fff"/>
<path d="M449.5 886H459V893H453L451 896V893H449.5Z" fill="#fff"/><rect x="456.5" y="889.5" width="8" height="7" fill="#fff"/><path d="M461 896L464 900"/>
<path d="M478 887C478 884 483 884 484 887C485 884 490 884 490 887V897H478Z" fill="#fff"/><rect x="481.5" y="889.5" width="8" height="9" fill="#fff"/><path d="M489 894V901M485 897H494" stroke="#e0c820" stroke-width="2"/>
<path d="M228.5 911L240.5 923"/>
<path d="M252 912L262 922" /><polygon points="258,921 263,916 265,924" fill="#444"/>
<rect x="273.5" y="911.5" width="15" height="13" stroke="#333"/>
<ellipse cx="304" cy="918" rx="7.6" ry="5.5" stroke="#333"/>
<rect x="319.5" y="911.5" width="15" height="15" fill="#fff" stroke="#333"/><path d="M322 914H332M322 917H332M322 920H332M322 923H332" stroke="#555"/><text x="322" y="918" font-size="8" fill="#333" stroke="none">A</text>
<rect x="342.5" y="911.5" width="15" height="15" fill="#fff" stroke="#333"/><path d="M345 914V924M348 914V924M351 914V924M354 914V924" stroke="#555"/>
<path d="M365 924L377 911V926L372 927V921L369 924Z" fill="#3b4ba8" stroke="none"/><path d="M377 911L380 913V925L377 926Z" fill="#9aa0d8" stroke="none"/>
<circle cx="396" cy="911" r="2" fill="#d22"/><circle cx="403" cy="918" r="2" fill="#d2c020"/><circle cx="396" cy="925" r="2" fill="#3b4ba8"/><circle cx="389" cy="918" r="2" fill="#d2c020"/><circle cx="396" cy="918" r="5.5" stroke="#3b4ba8" stroke-dasharray="2 3"/>
<rect x="411.5" y="911.5" width="15" height="15" fill="#fff" stroke="#333" stroke-dasharray="2 1"/><circle cx="419" cy="916" r="3" fill="#b63"/><rect x="416" y="919" width="6" height="6" fill="#a33"/>
<rect x="435.5" y="911.5" width="15" height="14" fill="#f4ec80" stroke="#333"/><path d="M436 925L443 917L450 925Z" fill="#888" stroke="none"/>
<path d="M467 917L472 911L478 917L473 922Z" fill="#ddd"/>
<path d="M499 924C503 922 507 922 509 917L512 911" stroke="#3b4ba8" stroke-width="2"/>
</g>
<rect x="148" y="884" width="109" height="18" fill="#fff"/><rect x="245" y="885" width="11" height="16" fill="#ece9d8"/><use href="#dd" x="251" y="891"/><rect x="162" y="893" width="69" height="1" fill="#000"/>
<rect x="262" y="897" width="16" height="4" fill="#000"/>
<use href="#dd" x="111" y="891"/><use href="#dd" x="288" y="896"/><use href="#dd" x="503" y="897"/>
<g font-size="13.5" fill="#000" text-rendering="geometricPrecision"><text x="14" y="924" textLength="73" lengthAdjust="spacingAndGlyphs">図形の調整(<tspan text-decoration="underline">R</tspan>)</text><text x="132" y="924" textLength="79" lengthAdjust="spacingAndGlyphs">オートシェイプ(<tspan text-decoration="underline">U</tspan>)</text></g>
<use href="#dd" x="93" y="917"/><use href="#dd" x="216" y="917"/>
<path d="M109 911V925L112 922L115 927L117 926L114 921H118Z" fill="#fff" stroke="#444" shape-rendering="auto"/>
<rect x="463" y="923" width="16" height="4" fill="#ffff00"/><use href="#dd" x="487" y="917"/>
<rect x="497" y="923" width="16" height="4" fill="#0000ff"/><use href="#dd" x="521" y="917"/>
<text x="532" y="921" font-size="15" font-weight="bold" font-family="'Liberation Serif',serif" fill="#3b4ba8" shape-rendering="auto">A</text><rect x="531" y="923" width="16" height="4" fill="#ff0000"/><use href="#dd" x="555" y="917"/>
<g fill="#444"><rect x="565" y="913" width="15" height="2"/><rect x="565" y="918" width="15" height="4"/><path d="M588 913h15v1h-15zM588 917h15v1h-15z"/></g>
<path d="M588 921h15v1h-15z" fill="#888"/>
<path d="M612 916H627M612 924H627M623 913L627 916L623 919M616 921L612 924L616 927" fill="none" stroke="#444" shape-rendering="auto"/>
<rect x="638" y="914" width="11" height="11" fill="#777"/><rect x="635" y="911" width="11" height="11" fill="#4aa0a8" stroke="#333"/>
<path d="M657 916L662 911H673V921L669 926H657Z" fill="#c9ced8" stroke="#999" shape-rendering="auto"/><rect x="657" y="916" width="11" height="10" fill="#4aa0a8"/>
<use href="#dd" x="682" y="922"/>

<!-- floating toolbar -->
<rect x="1082" y="892" width="74" height="40" fill="#a9a797"/><rect x="1085" y="895" width="68" height="37" fill="#ece9d8"/><rect x="1085" y="895" width="68" height="17" fill="#a9a797"/>
<text x="1086" y="908" font-size="13" font-weight="bold" fill="#333">線</text><polygon points="1121,901 1131,901 1126,906" fill="#333"/>
<path d="M1141 900L1149 908M1149 900L1141 908" stroke="#333" stroke-width="1.6" shape-rendering="auto"/>
<path d="M1089 918L1099 928" stroke="#333" shape-rendering="auto"/><path d="M1113 918L1122 927" stroke="#333" shape-rendering="auto"/><polygon points="1118,927 1124,921 1125,928" fill="#444"/><polygon points="1133,916 1139,918 1135,922" fill="#444"/><path d="M1135 919L1145 928" stroke="#444" stroke-width="2" shape-rendering="auto"/>

<!-- taskbar overlay -->
<rect x="977" y="928" width="285" height="9" fill="#2466e0"/><rect x="977" y="928" width="285" height="1" fill="#3f80f0"/>
<rect x="978" y="933" width="3" height="4" fill="#0a2a90"/>
<rect x="994" y="934" width="9" height="3" fill="#14286a"/><rect x="1011" y="932" width="10" height="5" fill="#e02020"/><rect x="1022" y="932" width="2" height="5" fill="#c8602a"/>
<rect x="1042" y="934" width="2" height="3" fill="#fff"/><rect x="1051" y="933" width="7" height="4" fill="#fff"/><rect x="1060" y="934" width="4" height="3" fill="#fff"/><rect x="1072" y="932" width="5" height="5" fill="#f0d84a"/><rect x="1078" y="932" width="6" height="5" fill="#ccc"/>
<rect x="1094" y="934" width="10" height="3" fill="#c85"/><rect x="1120" y="934" width="6" height="3" fill="#ddd"/>
<rect x="1133" y="933" width="15" height="4" fill="#fff"/><rect x="1133" y="933" width="15" height="1" fill="#00108a"/>
<rect x="1165" y="934" width="3" height="3" fill="#fff"/><rect x="1174" y="933" width="15" height="4" fill="#888"/><rect x="1197" y="934" width="13" height="3" fill="#f5e98a"/>
<rect x="1218" y="929" width="24" height="8" rx="2" fill="#0c3a9a"/><text x="1220" y="936" font-size="8" fill="#fff" textLength="20" lengthAdjust="spacing">CAPS</text><rect x="1247" y="935" width="5" height="1" fill="#fff"/>
</svg>
</body></html>
